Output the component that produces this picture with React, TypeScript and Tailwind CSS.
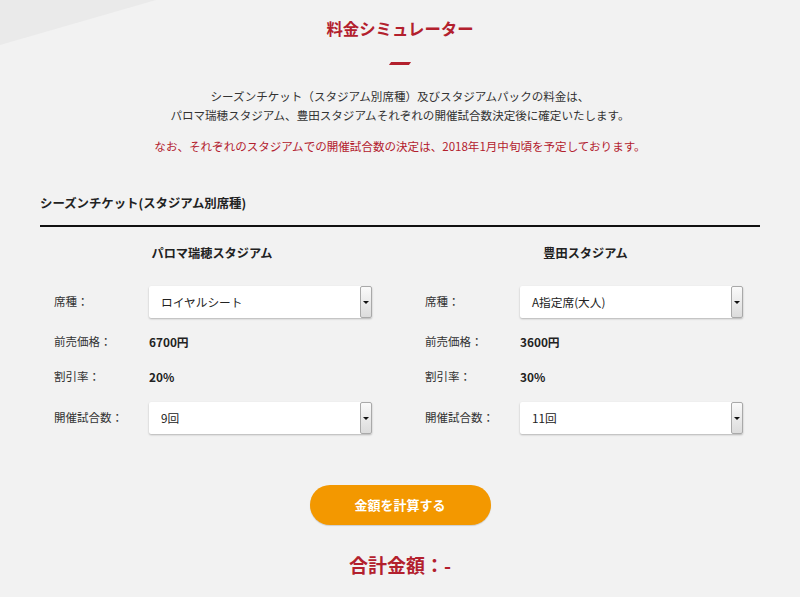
const FONT = '"Noto Sans CJK JP", "Noto Sans", "Liberation Sans", sans-serif'

interface Stadium {
  name: string
  seat: string
  price: string
  discount: string
  games: string
}

const stadiums: Stadium[] = [
  { name: 'パロマ瑞穂スタジアム', seat: 'ロイヤルシート', price: '6700円', discount: '20%', games: '9回' },
  { name: '豊田スタジアム', seat: 'A指定席(大人)', price: '3600円', discount: '30%', games: '11回' },
]

function Select({ value }: { value: string }) {
  return (
    <div className="flex h-[32px] w-[223px] items-center justify-between rounded-[2px] bg-white shadow-[0_1px_2px_rgba(0,0,0,0.25)]">
      <span className="pl-[12px] text-[11.7px] text-[#222]">{value}</span>
      <span className="flex h-full w-[12px] items-center justify-center rounded-[2px] border border-[#a9a9a9] bg-gradient-to-b from-[#fafafa] to-[#dcdcdc]">
        <span className="h-0 w-0 border-x-[3px] border-t-[3px] border-x-transparent border-t-[#111]" />
      </span>
    </div>
  )
}

function Label({ children }: { children: React.ReactNode }) {
  return <span className="w-[95px] shrink-0 text-[11.5px] text-[#333]">{children}</span>
}

function Column({ s, width }: { s: Stadium; width: string }) {
  return (
    <div className={`flex flex-col ${width}`}>
      <h3 className="text-center text-[12.2px] font-bold leading-[18px] text-[#222]">{s.name}</h3>
      <div className="mt-[24px] flex items-center pl-[14px]">
        <Label>席種：</Label>
        <Select value={s.seat} />
      </div>
      <div className="mt-[14px] flex h-[20px] items-center pl-[14px]">
        <Label>前売価格：</Label>
        <span className="text-[11.8px] font-bold text-[#222]">{s.price}</span>
      </div>
      <div className="mt-[15px] flex h-[20px] items-center pl-[14px]">
        <Label>割引率：</Label>
        <span className="text-[11.8px] font-bold text-[#222]">{s.discount}</span>
      </div>
      <div className="mt-[15px] flex items-center pl-[14px]">
        <Label>開催試合数：</Label>
        <Select value={s.games} />
      </div>
    </div>
  )
}

export default function App() {
  return (
    <div className="relative h-[597px] overflow-hidden bg-[#f2f2f2]" style={{ fontFamily: FONT }}>
      <svg className="absolute left-0 top-0" width="200" height="60" viewBox="0 0 200 60">
        <polygon points="0,0 156,0 0,45" fill="#eaeaea" />
      </svg>

      <div className="relative flex flex-col items-center pt-[18px] text-center">
        <h1 className="text-[16.4px] font-bold leading-[20px] text-[#b3202d]">料金シミュレーター</h1>
        <div className="mt-[24px] h-[3px] w-[20px] -skew-x-[35deg] bg-[#b3202d]" />
        <p className="mt-[22px] text-[11.55px] leading-[19px] text-[#333]">
          シーズンチケット（スタジアム別席種）及びスタジアムパックの料金は、
          <br />
          パロマ瑞穂スタジアム、豊田スタジアムそれぞれの開催試合数決定後に確定いたします。
        </p>
        <p className="mt-[12px] text-[11.55px] leading-[19px] text-[#b3202d]">
          なお、それぞれのスタジアムでの開催試合数の決定は、2018年1月中旬頃を予定しております。
        </p>
      </div>

      <div className="relative mx-[40px] mt-[37px]">
        <h2 className="text-[12.4px] font-bold leading-[20px] text-[#222]">シーズンチケット(スタジアム別席種)</h2>
        <div className="mt-[12px] h-[2px] bg-[#111]" />
        <div className="mt-[17px] flex gap-[27px]">
          <Column s={stadiums[0]} width="w-[345px]" />
          <Column s={stadiums[1]} width="w-[350px]" />
        </div>
      </div>

      <div className="relative flex flex-col items-center">
        <button className="mt-[51px] h-[40px] w-[181px] rounded-full bg-[#f39800] text-[13px] font-bold text-white shadow-[0_1px_1px_rgba(0,0,0,0.15)]">
          金額を計算する
        </button>
        <p className="mt-[27px] text-[19px] font-bold leading-[26px] text-[#b3202d]">合計金額：-</p>
      </div>
    </div>
  )
}
